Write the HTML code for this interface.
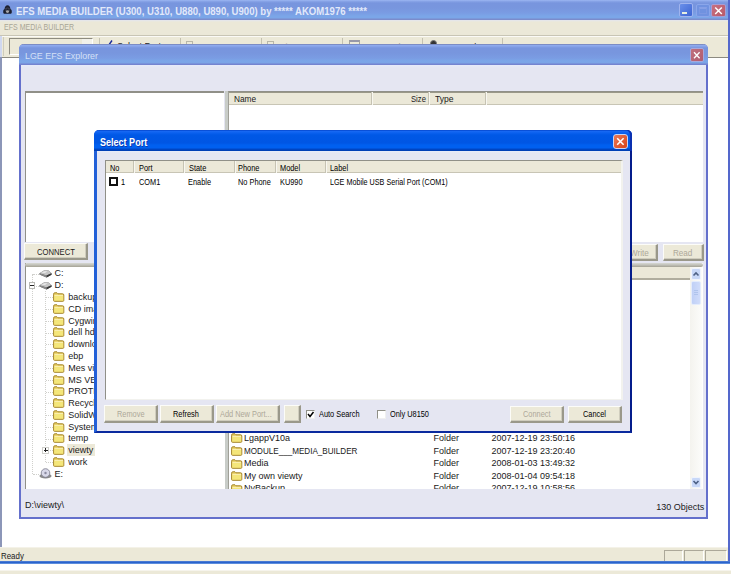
<!DOCTYPE html>
<html><head><meta charset="utf-8">
<style>
*{box-sizing:border-box;margin:0;padding:0}
html,body{width:731px;height:574px;overflow:hidden;background:#fff;font-family:"Liberation Sans",sans-serif;color:#000}
.a{position:absolute}
.t{position:absolute;white-space:nowrap;line-height:1;transform-origin:0 0;font-size:9px;color:#1a1a1a}
.d{transform:scaleX(.82);color:#000}
.btn{position:absolute;background:#ece9d8;border:1px solid #fcfcf8;border-right:2px solid #9a988a;border-bottom:2px solid #9a988a;box-shadow:inset -1px -1px 0 #d0cdbe}
.sep{position:absolute;width:1px;background:#c4c1b1}
.hd{position:absolute;width:2px;top:0;height:100%;border-left:1px solid #c6c3b3;border-right:1px solid #f8f7f0}
.fold{position:absolute;width:11px;height:8px}
</style></head><body>

<!-- ========== MAIN WINDOW ========== -->
<div class="a" style="left:0;top:0;width:730px;height:20px;background:linear-gradient(#9cb6f2 0px,#86a2e6 1.5px,#7895de 3px,#7896de 8px,#7a9ce3 13px,#7ba6e8 16px,#7ba6e8 18px,#7b8ccc 19px,#7b8ccc 20px)"></div>
<!-- icon -->
<svg class="a" style="left:2px;top:4px" width="11" height="11"><path d="M2.5 5 Q3 1.2 5.5 1.2 Q8 1.2 8.5 5 Q10 5.5 9.8 7.5 Q10 9.5 9 9.8 L2 9.8 Q1 9.5 1.2 7.5 Q1 5.5 2.5 5 Z" fill="#1c2030"/><path d="M3.5 4.5 Q5.5 3.5 7.5 4.5" stroke="#556" stroke-width="0.8" fill="none"/><ellipse cx="5.5" cy="7.6" rx="1.6" ry="1.3" fill="#a8a8ac"/><circle cx="4" cy="6" r="0.5" fill="#889"/><circle cx="7" cy="6" r="0.5" fill="#889"/></svg>
<div class="t" style="left:16px;top:6.7px;font-size:10px;font-weight:bold;color:#e2e9fa;transform:scaleX(.957)">EFS MEDIA BUILDER (U300, U310, U880, U890, U900) by ***** AKOM1976 *****</div>
<!-- title buttons -->
<div class="a" style="left:679px;top:3px;width:14px;height:14px;border-radius:2px;background:linear-gradient(135deg,#6a90ea,#3d64d2);border:1px solid #a0b4ee"></div>
<div class="a" style="left:682px;top:12px;width:5px;height:2px;background:#e8f0e0"></div>
<div class="a" style="left:695.5px;top:3.5px;width:14px;height:13.5px;border-radius:2px;background:#7092e0;border:1px solid #8aa6ea"></div>
<div class="a" style="left:698.5px;top:6.5px;width:8px;height:7px;border:1px solid #7c98e2;border-top:2px solid #86a0e6"></div>
<div class="a" style="left:711px;top:3.5px;width:15px;height:13.5px;border-radius:2px;background:linear-gradient(135deg,#c87080,#b85a6a);border:1px solid #a89cd4"></div>
<svg class="a" style="left:711px;top:3.5px" width="15" height="14"><path d="M4.2 3.5 L10.8 10 M10.8 3.5 L4.2 10" stroke="#fff" stroke-width="1.5"/></svg>

<!-- menu bar -->
<div class="a" style="left:0;top:20px;width:728px;height:15px;background:linear-gradient(#e2e4ee 0,#e8e8e4 1px,#ebe8d8 2px)"></div>
<div class="t" style="left:3.7px;top:22.8px;font-size:8.3px;color:#a8a596;transform:scaleX(.85)">EFS MEDIA BUILDER</div>
<div class="a" style="left:0;top:35px;width:728px;height:1px;background:#c8c5b5"></div>
<!-- toolbar -->
<div class="a" style="left:0;top:36px;width:728px;height:21px;background:#ece9d8;border-top:1px solid #fbfaf6"></div>
<div class="a" style="left:3px;top:37px;width:1px;height:19px;background:#cfccbc"></div>
<div class="a" style="left:8.5px;top:38px;width:84px;height:17px;border:1px solid #8e8c80;border-right-color:#fff;border-bottom-color:#fff;background:#ece9d8"></div><div class="a" style="left:82px;top:39px;width:10px;height:6px;background:#f2f1ea"></div>
<div class="sep" style="left:99px;top:38px;height:17px"></div>
<div class="sep" style="left:180px;top:38px;height:17px"></div>
<div class="sep" style="left:261px;top:38px;height:17px"></div>
<div class="sep" style="left:342px;top:38px;height:17px"></div>
<div class="sep" style="left:422px;top:38px;height:17px"></div>
<div class="sep" style="left:502px;top:38px;height:17px"></div>
<svg class="a" style="left:106px;top:39.5px" width="7" height="6"><path d="M0.8 4.5 L2.5 5.5 L6 0.5" stroke="#1a2a9a" stroke-width="1.4" fill="none"/></svg>
<div class="t" style="left:117px;top:42px;font-size:9px;color:#222">Select Port</div>
<div class="a" style="left:186px;top:41px;width:7px;height:5px;border:1px solid #b8b6a8;border-bottom:0"></div>
<div class="t" style="left:198px;top:42.5px;font-size:9px;color:#a8a698">Connect Port</div>
<div class="a" style="left:267px;top:41px;width:7px;height:5px;border:1px solid #b8b6a8;border-bottom:0"></div>
<div class="t" style="left:279px;top:42.5px;font-size:9px;color:#a8a698">Disconnect</div>
<div class="a" style="left:348.5px;top:39.5px;width:11px;height:7px;border:1px solid #a8a698;border-top:2px solid #9898a8;border-bottom:0"></div>
<div class="t" style="left:363px;top:42.5px;font-size:9px;color:#a8a698">EFS Explorer</div>
<div class="a" style="left:429.5px;top:39.5px;width:7px;height:7px;border-radius:50%;background:#333;border:1.5px solid #777"></div>
<div class="t" style="left:440px;top:42.5px;font-size:9px;color:#222">EFS Tools</div>

<!-- client -->
<div class="a" style="left:0;top:36px;width:2px;height:21px;background:#d0d8f0"></div><div class="a" style="left:0;top:57px;width:2px;height:490px;background:#8c96b8"></div>
<div class="a" style="left:2px;top:57px;width:726px;height:1px;background:#8c8a80"></div>

<!-- status bar -->
<div class="a" style="left:0;top:547px;width:728px;height:14px;background:#ece9d8;border-top:1px solid #f4f2e8"></div>
<div class="t" style="left:1px;top:552px;font-size:9px;color:#1a1a1a;transform:scaleX(.88)">Ready</div>
<div class="a" style="left:664px;top:550px;width:19px;height:11px;border:1px solid #aca899;border-right-color:#fff;border-bottom:0"></div>
<div class="a" style="left:684px;top:550px;width:20px;height:11px;border:1px solid #aca899;border-right-color:#fff;border-bottom:0"></div>
<div class="a" style="left:705px;top:550px;width:22px;height:11px;border:1px solid #aca899;border-right-color:#fff;border-bottom:0"></div>

<!-- borders -->
<div class="a" style="left:728px;top:0;width:2px;height:564px;background:#5468cc"></div>
<div class="a" style="left:0;top:561px;width:730px;height:3px;background:linear-gradient(#6890dc 0,#2a64cc 1px,#2a64cc 2px,#90b4ec 3px)"></div>
<div class="a" style="left:0;top:570px;width:731px;height:4px;background:#ece9d8;border-top:1px solid #f6f4ec"></div>

<!-- ========== EXPLORER WINDOW ========== -->
<div class="a" style="left:19px;top:44px;width:689px;height:474.8px;background:linear-gradient(#e6ebfa 21px,#e5e6f2 24px);border:2px solid #6470cc;border-top:0;border-radius:5px 5px 0 0"></div>
<div class="a" style="left:19px;top:44px;width:689px;height:21px;border-radius:5px 5px 0 0;background:linear-gradient(#7c8cc4 0,#7c8cc4 1px,#92aef0 1px,#86a2e8 2.5px,#7895de 4px,#7896de 9px,#7a9ce3 14px,#7ba6e8 17px,#7ba4e6 19px,#7484d0 20px,#7484d0 21px)"></div>
<div class="t" style="left:24.7px;top:51.2px;font-size:9.6px;color:#d4e0f6;transform:scaleX(.925)">LGE EFS Explorer</div>
<div class="a" style="left:690px;top:47.7px;width:13.5px;height:14.3px;border-radius:2px;background:linear-gradient(135deg,#c0707e,#b05c70);border:1px solid #a8a8dc"></div>
<svg class="a" style="left:690px;top:47.7px" width="14" height="15"><path d="M4 4.2 L9.6 10.2 M9.6 4.2 L4 10.2" stroke="#fff" stroke-width="1.3"/></svg>

<!-- upper left pane -->
<div class="a" style="left:25px;top:91px;width:199px;height:151px;background:#fff;border-top:2px solid #909088;border-left:1px solid #909088"></div>
<!-- splitter -->
<div class="a" style="left:225px;top:91px;width:3px;height:151px;background:#c8ccc8"></div>
<!-- upper right pane -->
<div class="a" style="left:228px;top:91px;width:475px;height:151px;background:#fff;border-top:1px solid #909088;border-left:1px solid #a0a098"></div>
<div class="a" style="left:229px;top:92px;width:474px;height:13px;background:#ebe8d8;border-top:1px solid #9a9888;border-bottom:1px solid #c8c5b5"></div>
<div class="hd" style="left:371px;top:92px;height:13px;position:absolute"></div>
<div class="hd" style="left:428px;top:92px;height:13px;position:absolute"></div>
<div class="hd" style="left:485px;top:92px;height:13px;position:absolute"></div>
<div class="t" style="left:233.5px;top:95px;transform:scaleX(.92)">Name</div>
<div class="t" style="left:411px;top:95px;transform:scaleX(.85)">Size</div>
<div class="t" style="left:435px;top:95px;transform:scaleX(.95)">Type</div>

<!-- connect/write/read buttons -->
<div class="btn" style="left:24px;top:243px;width:64px;height:17px"></div>
<div class="t" style="left:37px;top:247.5px;transform:scaleX(.85)">CONNECT</div>
<div class="btn" style="left:596px;top:244px;width:62px;height:17px"></div>
<div class="t" style="left:630px;top:249px;color:#aca899;transform:scaleX(.9)">Write</div>
<div class="btn" style="left:663px;top:244px;width:41px;height:17px"></div>
<div class="t" style="left:673px;top:249px;color:#aca899;transform:scaleX(.9)">Read</div>

<!-- lower left tree -->
<div class="a" style="left:25px;top:263px;width:200px;height:226px;background:#fff;border-left:1px solid #909088"></div>
<!-- lower right list -->
<div class="a" style="left:225px;top:263px;width:478px;height:226px;background:#fff"></div>
<div class="a" style="left:24.5px;top:263px;width:678px;height:4px;border-radius:2px;background:linear-gradient(#d6d8d2,#c0c0b8 2px,#a4a294)"></div>
<div class="a" style="left:225px;top:267px;width:3px;height:222px;background:#c8ccc8"></div>
<div class="a" style="left:228px;top:267px;width:1px;height:222px;background:#a0a098"></div>
<div class="a" style="left:229px;top:267px;width:461px;height:13px;background:#ebe8d8;border-bottom:2px solid #b0ad9e"></div>

<div class="a" style="left:32px;top:273.7px;width:1px;height:200.3px;border-left:1px dotted #d0d0cc"></div>
<div class="a" style="left:45px;top:290.5px;width:1px;height:171.7px;border-left:1px dotted #d0d0cc"></div>
<div class="a" style="left:33px;top:273.7px;width:6px;height:1px;border-top:1px dotted #d0d0cc"></div>
<svg class="a" style="left:38.5px;top:270.1px" width="13" height="8"><path d="M0.5 3.2 L5 0.6 L9.5 0.6 L12.5 3.2 L12.5 4.8 L7.5 7.4 L0.5 4.6 Z" fill="#5c5c5c"/><path d="M0.5 3.2 L5 0.6 L9.5 0.6 L12.5 3.2 L7.5 5.6 Z" fill="#c6c6c6"/><path d="M2.5 2.8 L5.5 1.2 L8.5 1.2 L6 3 Z" fill="#eaeaea"/><path d="M7.5 5.6 L12.5 3.2 L12.5 4.8 L7.5 7.4 Z" fill="#383838"/><path d="M0.5 3.2 L7.5 5.6 L7.5 7.4 L0.5 4.6 Z" fill="#8a8a8a"/></svg>
<div class="t" style="left:54.5px;top:269.4px">C:</div>
<div class="a" style="left:33px;top:285.5px;width:6px;height:1px;border-top:1px dotted #d0d0cc"></div>
<svg class="a" style="left:38.5px;top:281.9px" width="13" height="8"><path d="M0.5 3.2 L5 0.6 L9.5 0.6 L12.5 3.2 L12.5 4.8 L7.5 7.4 L0.5 4.6 Z" fill="#5c5c5c"/><path d="M0.5 3.2 L5 0.6 L9.5 0.6 L12.5 3.2 L7.5 5.6 Z" fill="#c6c6c6"/><path d="M2.5 2.8 L5.5 1.2 L8.5 1.2 L6 3 Z" fill="#eaeaea"/><path d="M7.5 5.6 L12.5 3.2 L12.5 4.8 L7.5 7.4 Z" fill="#383838"/><path d="M0.5 3.2 L7.5 5.6 L7.5 7.4 L0.5 4.6 Z" fill="#8a8a8a"/></svg>
<div class="t" style="left:54.5px;top:281.2px">D:</div>
<div class="a" style="left:46px;top:297.3px;width:7px;height:1px;border-top:1px dotted #d0d0cc"></div>
<svg class="a" style="left:52.8px;top:292.1px" width="12" height="10"><path d="M0.6 2.2 Q0.6 0.8 1.8 0.8 L4 0.8 L5 1.8 L9.6 1.8 Q10.8 1.8 10.8 3 L10.8 8.4 Q10.8 9.3 9.9 9.3 L1.5 9.3 Q0.6 9.3 0.6 8.4 Z" fill="#e8cf62" stroke="#a4852e" stroke-width="1"/><path d="M1.2 3.6 L10.2 3.6 L10.2 8.6 L1.2 8.6 Z" fill="#f4e67a"/><path d="M1.4 3.4 L10 3.4" stroke="#fff6c8" stroke-width="0.8"/></svg>
<div class="t" style="left:68.3px;top:293.0px">backup</div>
<div class="a" style="left:46px;top:309.0px;width:7px;height:1px;border-top:1px dotted #d0d0cc"></div>
<svg class="a" style="left:52.8px;top:303.8px" width="12" height="10"><path d="M0.6 2.2 Q0.6 0.8 1.8 0.8 L4 0.8 L5 1.8 L9.6 1.8 Q10.8 1.8 10.8 3 L10.8 8.4 Q10.8 9.3 9.9 9.3 L1.5 9.3 Q0.6 9.3 0.6 8.4 Z" fill="#e8cf62" stroke="#a4852e" stroke-width="1"/><path d="M1.2 3.6 L10.2 3.6 L10.2 8.6 L1.2 8.6 Z" fill="#f4e67a"/><path d="M1.4 3.4 L10 3.4" stroke="#fff6c8" stroke-width="0.8"/></svg>
<div class="t" style="left:68.3px;top:304.8px">CD image</div>
<div class="a" style="left:46px;top:320.8px;width:7px;height:1px;border-top:1px dotted #d0d0cc"></div>
<svg class="a" style="left:52.8px;top:315.6px" width="12" height="10"><path d="M0.6 2.2 Q0.6 0.8 1.8 0.8 L4 0.8 L5 1.8 L9.6 1.8 Q10.8 1.8 10.8 3 L10.8 8.4 Q10.8 9.3 9.9 9.3 L1.5 9.3 Q0.6 9.3 0.6 8.4 Z" fill="#e8cf62" stroke="#a4852e" stroke-width="1"/><path d="M1.2 3.6 L10.2 3.6 L10.2 8.6 L1.2 8.6 Z" fill="#f4e67a"/><path d="M1.4 3.4 L10 3.4" stroke="#fff6c8" stroke-width="0.8"/></svg>
<div class="t" style="left:68.3px;top:316.6px">Cygwin</div>
<div class="a" style="left:46px;top:332.6px;width:7px;height:1px;border-top:1px dotted #d0d0cc"></div>
<svg class="a" style="left:52.8px;top:327.4px" width="12" height="10"><path d="M0.6 2.2 Q0.6 0.8 1.8 0.8 L4 0.8 L5 1.8 L9.6 1.8 Q10.8 1.8 10.8 3 L10.8 8.4 Q10.8 9.3 9.9 9.3 L1.5 9.3 Q0.6 9.3 0.6 8.4 Z" fill="#e8cf62" stroke="#a4852e" stroke-width="1"/><path d="M1.2 3.6 L10.2 3.6 L10.2 8.6 L1.2 8.6 Z" fill="#f4e67a"/><path d="M1.4 3.4 L10 3.4" stroke="#fff6c8" stroke-width="0.8"/></svg>
<div class="t" style="left:68.3px;top:328.3px">dell hdd</div>
<div class="a" style="left:46px;top:344.4px;width:7px;height:1px;border-top:1px dotted #d0d0cc"></div>
<svg class="a" style="left:52.8px;top:339.2px" width="12" height="10"><path d="M0.6 2.2 Q0.6 0.8 1.8 0.8 L4 0.8 L5 1.8 L9.6 1.8 Q10.8 1.8 10.8 3 L10.8 8.4 Q10.8 9.3 9.9 9.3 L1.5 9.3 Q0.6 9.3 0.6 8.4 Z" fill="#e8cf62" stroke="#a4852e" stroke-width="1"/><path d="M1.2 3.6 L10.2 3.6 L10.2 8.6 L1.2 8.6 Z" fill="#f4e67a"/><path d="M1.4 3.4 L10 3.4" stroke="#fff6c8" stroke-width="0.8"/></svg>
<div class="t" style="left:68.3px;top:340.1px">download</div>
<div class="a" style="left:46px;top:356.2px;width:7px;height:1px;border-top:1px dotted #d0d0cc"></div>
<svg class="a" style="left:52.8px;top:351.0px" width="12" height="10"><path d="M0.6 2.2 Q0.6 0.8 1.8 0.8 L4 0.8 L5 1.8 L9.6 1.8 Q10.8 1.8 10.8 3 L10.8 8.4 Q10.8 9.3 9.9 9.3 L1.5 9.3 Q0.6 9.3 0.6 8.4 Z" fill="#e8cf62" stroke="#a4852e" stroke-width="1"/><path d="M1.2 3.6 L10.2 3.6 L10.2 8.6 L1.2 8.6 Z" fill="#f4e67a"/><path d="M1.4 3.4 L10 3.4" stroke="#fff6c8" stroke-width="0.8"/></svg>
<div class="t" style="left:68.3px;top:351.9px">ebp</div>
<div class="a" style="left:46px;top:367.9px;width:7px;height:1px;border-top:1px dotted #d0d0cc"></div>
<svg class="a" style="left:52.8px;top:362.7px" width="12" height="10"><path d="M0.6 2.2 Q0.6 0.8 1.8 0.8 L4 0.8 L5 1.8 L9.6 1.8 Q10.8 1.8 10.8 3 L10.8 8.4 Q10.8 9.3 9.9 9.3 L1.5 9.3 Q0.6 9.3 0.6 8.4 Z" fill="#e8cf62" stroke="#a4852e" stroke-width="1"/><path d="M1.2 3.6 L10.2 3.6 L10.2 8.6 L1.2 8.6 Z" fill="#f4e67a"/><path d="M1.4 3.4 L10 3.4" stroke="#fff6c8" stroke-width="0.8"/></svg>
<div class="t" style="left:68.3px;top:363.7px">Mes vidéos</div>
<div class="a" style="left:46px;top:379.7px;width:7px;height:1px;border-top:1px dotted #d0d0cc"></div>
<svg class="a" style="left:52.8px;top:374.5px" width="12" height="10"><path d="M0.6 2.2 Q0.6 0.8 1.8 0.8 L4 0.8 L5 1.8 L9.6 1.8 Q10.8 1.8 10.8 3 L10.8 8.4 Q10.8 9.3 9.9 9.3 L1.5 9.3 Q0.6 9.3 0.6 8.4 Z" fill="#e8cf62" stroke="#a4852e" stroke-width="1"/><path d="M1.2 3.6 L10.2 3.6 L10.2 8.6 L1.2 8.6 Z" fill="#f4e67a"/><path d="M1.4 3.4 L10 3.4" stroke="#fff6c8" stroke-width="0.8"/></svg>
<div class="t" style="left:68.3px;top:375.5px">MS VB98</div>
<div class="a" style="left:46px;top:391.5px;width:7px;height:1px;border-top:1px dotted #d0d0cc"></div>
<svg class="a" style="left:52.8px;top:386.3px" width="12" height="10"><path d="M0.6 2.2 Q0.6 0.8 1.8 0.8 L4 0.8 L5 1.8 L9.6 1.8 Q10.8 1.8 10.8 3 L10.8 8.4 Q10.8 9.3 9.9 9.3 L1.5 9.3 Q0.6 9.3 0.6 8.4 Z" fill="#e8cf62" stroke="#a4852e" stroke-width="1"/><path d="M1.2 3.6 L10.2 3.6 L10.2 8.6 L1.2 8.6 Z" fill="#f4e67a"/><path d="M1.4 3.4 L10 3.4" stroke="#fff6c8" stroke-width="0.8"/></svg>
<div class="t" style="left:68.3px;top:387.2px">PROTEUS</div>
<div class="a" style="left:46px;top:403.3px;width:7px;height:1px;border-top:1px dotted #d0d0cc"></div>
<svg class="a" style="left:52.8px;top:398.1px" width="12" height="10"><path d="M0.6 2.2 Q0.6 0.8 1.8 0.8 L4 0.8 L5 1.8 L9.6 1.8 Q10.8 1.8 10.8 3 L10.8 8.4 Q10.8 9.3 9.9 9.3 L1.5 9.3 Q0.6 9.3 0.6 8.4 Z" fill="#e8cf62" stroke="#a4852e" stroke-width="1"/><path d="M1.2 3.6 L10.2 3.6 L10.2 8.6 L1.2 8.6 Z" fill="#f4e67a"/><path d="M1.4 3.4 L10 3.4" stroke="#fff6c8" stroke-width="0.8"/></svg>
<div class="t" style="left:68.3px;top:399.0px">Recycled</div>
<div class="a" style="left:46px;top:415.1px;width:7px;height:1px;border-top:1px dotted #d0d0cc"></div>
<svg class="a" style="left:52.8px;top:409.9px" width="12" height="10"><path d="M0.6 2.2 Q0.6 0.8 1.8 0.8 L4 0.8 L5 1.8 L9.6 1.8 Q10.8 1.8 10.8 3 L10.8 8.4 Q10.8 9.3 9.9 9.3 L1.5 9.3 Q0.6 9.3 0.6 8.4 Z" fill="#e8cf62" stroke="#a4852e" stroke-width="1"/><path d="M1.2 3.6 L10.2 3.6 L10.2 8.6 L1.2 8.6 Z" fill="#f4e67a"/><path d="M1.4 3.4 L10 3.4" stroke="#fff6c8" stroke-width="0.8"/></svg>
<div class="t" style="left:68.3px;top:410.8px">SolidWorks</div>
<div class="a" style="left:46px;top:426.8px;width:7px;height:1px;border-top:1px dotted #d0d0cc"></div>
<svg class="a" style="left:52.8px;top:421.6px" width="12" height="10"><path d="M0.6 2.2 Q0.6 0.8 1.8 0.8 L4 0.8 L5 1.8 L9.6 1.8 Q10.8 1.8 10.8 3 L10.8 8.4 Q10.8 9.3 9.9 9.3 L1.5 9.3 Q0.6 9.3 0.6 8.4 Z" fill="#e8cf62" stroke="#a4852e" stroke-width="1"/><path d="M1.2 3.6 L10.2 3.6 L10.2 8.6 L1.2 8.6 Z" fill="#f4e67a"/><path d="M1.4 3.4 L10 3.4" stroke="#fff6c8" stroke-width="0.8"/></svg>
<div class="t" style="left:68.3px;top:422.6px">System Volume</div>
<div class="a" style="left:46px;top:438.6px;width:7px;height:1px;border-top:1px dotted #d0d0cc"></div>
<svg class="a" style="left:52.8px;top:433.4px" width="12" height="10"><path d="M0.6 2.2 Q0.6 0.8 1.8 0.8 L4 0.8 L5 1.8 L9.6 1.8 Q10.8 1.8 10.8 3 L10.8 8.4 Q10.8 9.3 9.9 9.3 L1.5 9.3 Q0.6 9.3 0.6 8.4 Z" fill="#e8cf62" stroke="#a4852e" stroke-width="1"/><path d="M1.2 3.6 L10.2 3.6 L10.2 8.6 L1.2 8.6 Z" fill="#f4e67a"/><path d="M1.4 3.4 L10 3.4" stroke="#fff6c8" stroke-width="0.8"/></svg>
<div class="t" style="left:68.3px;top:434.4px">temp</div>
<div class="a" style="left:46px;top:450.4px;width:7px;height:1px;border-top:1px dotted #d0d0cc"></div>
<svg class="a" style="left:52.8px;top:445.2px" width="12" height="10"><path d="M0.6 2.2 Q0.6 0.8 1.8 0.8 L4 0.8 L5 1.8 L9.6 1.8 Q10.8 1.8 10.8 3 L10.8 8.4 Q10.8 9.3 9.9 9.3 L1.5 9.3 Q0.6 9.3 0.6 8.4 Z" fill="#e8cf62" stroke="#a4852e" stroke-width="1"/><path d="M1.2 3.6 L10.2 3.6 L10.2 8.6 L1.2 8.6 Z" fill="#f4e67a"/><path d="M1.4 3.4 L10 3.4" stroke="#fff6c8" stroke-width="0.8"/></svg>
<div class="a" style="left:67px;top:444.4px;width:28px;height:12px;background:#ece9d8"></div>
<div class="t" style="left:68.3px;top:446.1px">viewty</div>
<div class="a" style="left:46px;top:462.2px;width:7px;height:1px;border-top:1px dotted #d0d0cc"></div>
<svg class="a" style="left:52.8px;top:457.0px" width="12" height="10"><path d="M0.6 2.2 Q0.6 0.8 1.8 0.8 L4 0.8 L5 1.8 L9.6 1.8 Q10.8 1.8 10.8 3 L10.8 8.4 Q10.8 9.3 9.9 9.3 L1.5 9.3 Q0.6 9.3 0.6 8.4 Z" fill="#e8cf62" stroke="#a4852e" stroke-width="1"/><path d="M1.2 3.6 L10.2 3.6 L10.2 8.6 L1.2 8.6 Z" fill="#f4e67a"/><path d="M1.4 3.4 L10 3.4" stroke="#fff6c8" stroke-width="0.8"/></svg>
<div class="t" style="left:68.3px;top:457.9px">work</div>
<div class="a" style="left:33px;top:474.0px;width:6px;height:1px;border-top:1px dotted #d0d0cc"></div>
<svg class="a" style="left:39px;top:467.5px" width="13" height="11"><ellipse cx="6.5" cy="8" rx="6" ry="2.6" fill="#8a8a8a"/><circle cx="6.5" cy="5" r="4.3" fill="#d8d8e8" stroke="#7a7a8a" stroke-width="0.8"/><circle cx="6.5" cy="5" r="1.2" fill="#8a8aa0"/></svg>
<div class="t" style="left:54.5px;top:469.7px">E:</div>
<div class="a" style="left:29px;top:282.0px;width:6px;height:7px;background:#fff;border:1px solid #b8b8b4"></div>
<div class="a" style="left:30px;top:285.0px;width:4px;height:1.2px;background:#222"></div>
<div class="a" style="left:42px;top:447.2px;width:7px;height:7px;background:#fff;border:1px solid #d0d0cc"></div>
<div class="a" style="left:43.5px;top:449.9px;width:4px;height:1px;background:#222"></div>
<div class="a" style="left:45px;top:448.4px;width:1px;height:4px;background:#222"></div>
<div class="a" style="left:229px;top:280px;width:461px;height:209px;overflow:hidden">
<svg class="a" style="left:2px;top:153.4px" width="12" height="10"><path d="M0.6 2.2 Q0.6 0.8 1.8 0.8 L4 0.8 L5 1.8 L9.6 1.8 Q10.8 1.8 10.8 3 L10.8 8.4 Q10.8 9.3 9.9 9.3 L1.5 9.3 Q0.6 9.3 0.6 8.4 Z" fill="#e8cf62" stroke="#a4852e" stroke-width="1"/><path d="M1.2 3.6 L10.2 3.6 L10.2 8.6 L1.2 8.6 Z" fill="#f4e67a"/><path d="M1.4 3.4 L10 3.4" stroke="#fff6c8" stroke-width="0.8"/></svg>
<div class="t" style="left:15px;top:154.1px">LgappV10a</div>
<div class="t" style="left:204.5px;top:154.1px">Folder</div>
<div class="t" style="left:262.5px;top:154.1px">2007-12-19 23:50:16</div>
<svg class="a" style="left:2px;top:165.9px" width="12" height="10"><path d="M0.6 2.2 Q0.6 0.8 1.8 0.8 L4 0.8 L5 1.8 L9.6 1.8 Q10.8 1.8 10.8 3 L10.8 8.4 Q10.8 9.3 9.9 9.3 L1.5 9.3 Q0.6 9.3 0.6 8.4 Z" fill="#e8cf62" stroke="#a4852e" stroke-width="1"/><path d="M1.2 3.6 L10.2 3.6 L10.2 8.6 L1.2 8.6 Z" fill="#f4e67a"/><path d="M1.4 3.4 L10 3.4" stroke="#fff6c8" stroke-width="0.8"/></svg>
<div class="t" style="left:15px;top:166.7px;transform:scaleX(.9)">MODULE___MEDIA_BUILDER</div>
<div class="t" style="left:204.5px;top:166.7px">Folder</div>
<div class="t" style="left:262.5px;top:166.7px">2007-12-19 23:20:40</div>
<svg class="a" style="left:2px;top:178.5px" width="12" height="10"><path d="M0.6 2.2 Q0.6 0.8 1.8 0.8 L4 0.8 L5 1.8 L9.6 1.8 Q10.8 1.8 10.8 3 L10.8 8.4 Q10.8 9.3 9.9 9.3 L1.5 9.3 Q0.6 9.3 0.6 8.4 Z" fill="#e8cf62" stroke="#a4852e" stroke-width="1"/><path d="M1.2 3.6 L10.2 3.6 L10.2 8.6 L1.2 8.6 Z" fill="#f4e67a"/><path d="M1.4 3.4 L10 3.4" stroke="#fff6c8" stroke-width="0.8"/></svg>
<div class="t" style="left:15px;top:179.2px">Media</div>
<div class="t" style="left:204.5px;top:179.2px">Folder</div>
<div class="t" style="left:262.5px;top:179.2px">2008-01-03 13:49:32</div>
<svg class="a" style="left:2px;top:191.1px" width="12" height="10"><path d="M0.6 2.2 Q0.6 0.8 1.8 0.8 L4 0.8 L5 1.8 L9.6 1.8 Q10.8 1.8 10.8 3 L10.8 8.4 Q10.8 9.3 9.9 9.3 L1.5 9.3 Q0.6 9.3 0.6 8.4 Z" fill="#e8cf62" stroke="#a4852e" stroke-width="1"/><path d="M1.2 3.6 L10.2 3.6 L10.2 8.6 L1.2 8.6 Z" fill="#f4e67a"/><path d="M1.4 3.4 L10 3.4" stroke="#fff6c8" stroke-width="0.8"/></svg>
<div class="t" style="left:15px;top:191.8px">My own viewty</div>
<div class="t" style="left:204.5px;top:191.8px">Folder</div>
<div class="t" style="left:262.5px;top:191.8px">2008-01-04 09:54:18</div>
<svg class="a" style="left:2px;top:203.6px" width="12" height="10"><path d="M0.6 2.2 Q0.6 0.8 1.8 0.8 L4 0.8 L5 1.8 L9.6 1.8 Q10.8 1.8 10.8 3 L10.8 8.4 Q10.8 9.3 9.9 9.3 L1.5 9.3 Q0.6 9.3 0.6 8.4 Z" fill="#e8cf62" stroke="#a4852e" stroke-width="1"/><path d="M1.2 3.6 L10.2 3.6 L10.2 8.6 L1.2 8.6 Z" fill="#f4e67a"/><path d="M1.4 3.4 L10 3.4" stroke="#fff6c8" stroke-width="0.8"/></svg>
<div class="t" style="left:15px;top:204.3px">NyBackup</div>
<div class="t" style="left:204.5px;top:204.3px">Folder</div>
<div class="t" style="left:262.5px;top:204.3px">2007-12-19 10:58:56</div>
<svg class="a" style="left:2px;top:216.1px" width="12" height="10"><path d="M0.6 2.2 Q0.6 0.8 1.8 0.8 L4 0.8 L5 1.8 L9.6 1.8 Q10.8 1.8 10.8 3 L10.8 8.4 Q10.8 9.3 9.9 9.3 L1.5 9.3 Q0.6 9.3 0.6 8.4 Z" fill="#e8cf62" stroke="#a4852e" stroke-width="1"/><path d="M1.2 3.6 L10.2 3.6 L10.2 8.6 L1.2 8.6 Z" fill="#f4e67a"/><path d="M1.4 3.4 L10 3.4" stroke="#fff6c8" stroke-width="0.8"/></svg>
<div class="t" style="left:15px;top:216.9px">Others</div>
<div class="t" style="left:204.5px;top:216.9px">Folder</div>
<div class="t" style="left:262.5px;top:216.9px">2007-12-19 10:58:56</div>
</div>
<!-- scrollbar -->
<div class="a" style="left:690px;top:267px;width:12px;height:222px;background:linear-gradient(90deg,#f4f3ee,#fcfcfa)"></div>
<div class="a" style="left:691px;top:268px;width:10px;height:12px;background:#c8d8f8;border:1px solid #f0f4fc;border-radius:2px"></div>
<svg class="a" style="left:691px;top:268px" width="10" height="12"><path d="M2.5 7.5 L5 5 L7.5 7.5" stroke="#4d6185" stroke-width="1.6" fill="none"/></svg>
<div class="a" style="left:690.5px;top:280.5px;width:10.5px;height:24px;background:linear-gradient(90deg,#c0d0f6,#d0dcfa);border:1px solid #e4ecfc;border-radius:2px"></div>
<div class="a" style="left:693.5px;top:289.5px;width:4px;height:5px;border-top:1px solid #b0c4ec;border-bottom:1px solid #b0c4ec"></div><div class="a" style="left:693.5px;top:291.5px;width:4px;height:1px;background:#b0c4ec"></div>
<div class="a" style="left:691px;top:477px;width:10px;height:11px;background:#c8d8f8;border:1px solid #f0f4fc;border-radius:2px"></div>
<svg class="a" style="left:691px;top:477px" width="10" height="11"><path d="M2.5 4 L5 6.5 L7.5 4" stroke="#4d6185" stroke-width="1.6" fill="none"/></svg>

<div class="t" style="left:25px;top:501px">D:\viewty\</div>
<div class="t" style="left:656.3px;top:502.5px">130 Objects</div>

<!-- ========== SELECT PORT DIALOG ========== -->
<div class="a" style="left:94px;top:130px;width:538px;height:303px;background:linear-gradient(#e8ecfa 21px,#e5e6f2 23px);border-radius:5px 5px 0 0;border-left:3px solid #2260d8;border-right:2px solid #041c8c;border-bottom:2px solid #0a2a9e"></div>
<div class="a" style="left:94px;top:130px;width:538px;height:21px;border-radius:5px 5px 0 0;box-shadow:inset -2px 0 0 #0a30b0;background:linear-gradient(#0a50d8 0,#0a50d8 1px,#1a6af4 1px,#0a60ee 3px,#0058e6 5px,#0056e4 13px,#0060f0 15px,#0060f0 18px,#0048c8 19px,#003cb0 21px)"></div>
<div class="t" style="left:100px;top:136.5px;font-size:10.5px;font-weight:bold;color:#fff;transform:scaleX(.86);text-shadow:1px 1px 0 #0a3ab0">Select Port</div>
<div class="a" style="left:613.4px;top:133.7px;width:14.6px;height:15.2px;background:linear-gradient(135deg,#ea7a58,#d84418);border:1px solid #c8d4f4;border-radius:3px"></div>
<svg class="a" style="left:613.4px;top:133.7px" width="15" height="15"><path d="M4.2 4.3 L10.6 10.8 M10.6 4.3 L4.2 10.8" stroke="#fff" stroke-width="1.6"/></svg>

<!-- listview -->
<div class="a" style="left:105px;top:160px;width:518px;height:240px;background:#fff;border-top:1px solid #909088;border-left:1px solid #909088;border-right:2px solid #f2f2ee;border-bottom:1px solid #f2f2ee"></div>
<div class="a" style="left:106px;top:161px;width:515px;height:12px;background:#ebe8d8;border-bottom:1px solid #c8c5b5"></div>
<div class="hd" style="left:133px;top:161px;height:12px"></div>
<div class="hd" style="left:183px;top:161px;height:12px"></div>
<div class="hd" style="left:234px;top:161px;height:12px"></div>
<div class="hd" style="left:275px;top:161px;height:12px"></div>
<div class="hd" style="left:325px;top:161px;height:12px"></div>
<div class="t d" style="left:110px;top:164px">No</div>
<div class="t d" style="left:138.5px;top:164px">Port</div>
<div class="t d" style="left:188.5px;top:164px">State</div>
<div class="t d" style="left:238px;top:164px">Phone</div>
<div class="t d" style="left:280px;top:164px">Model</div>
<div class="t d" style="left:330px;top:164px">Label</div>

<div class="a" style="left:109px;top:176.5px;width:9px;height:9px;border:2px solid #111"></div>
<div class="t d" style="left:121px;top:178px">1</div>
<div class="t d" style="left:138.5px;top:178px">COM1</div>
<div class="t d" style="left:188px;top:178px">Enable</div>
<div class="t d" style="left:238px;top:178px">No Phone</div>
<div class="t d" style="left:280px;top:178px">KU990</div>
<div class="t d" style="left:330px;top:178px;transform:scaleX(.80)">LGE Mobile USB Serial Port (COM1)</div>

<!-- dialog buttons -->
<div class="btn" style="left:104px;top:405px;width:54px;height:18px"></div>
<div class="t d" style="left:117px;top:410px;color:#aca899">Remove</div>
<div class="btn" style="left:160px;top:405px;width:54px;height:18px"></div>
<div class="t d" style="left:173px;top:410px">Refresh</div>
<div class="btn" style="left:216px;top:405px;width:64px;height:18px"></div>
<div class="t d" style="left:220px;top:410px;color:#aca899">Add New Port...</div>
<div class="btn" style="left:284px;top:405px;width:17px;height:18px"></div>

<div class="a" style="left:306px;top:410px;width:9px;height:9px;background:#fff;border:1px solid #909088;border-right-color:#f0f0f0;border-bottom-color:#f0f0f0"></div>
<svg class="a" style="left:306px;top:410px" width="9" height="9"><path d="M2 4 L4 6.5 L7.5 2" stroke="#000" stroke-width="1.5" fill="none"/></svg>
<div class="t d" style="left:319px;top:410px">Auto Search</div>
<div class="a" style="left:377px;top:410px;width:9px;height:9px;background:#fff;border:1px solid #909088;border-right-color:#f0f0f0;border-bottom-color:#f0f0f0"></div>
<div class="t d" style="left:389.5px;top:410px">Only U8150</div>

<div class="btn" style="left:510px;top:406px;width:54px;height:17px"></div>
<div class="t d" style="left:523px;top:410px;color:#aca899">Connect</div>
<div class="btn" style="left:568px;top:406px;width:54px;height:17px"></div>
<div class="t d" style="left:583px;top:410px">Cancel</div>

</body></html>
